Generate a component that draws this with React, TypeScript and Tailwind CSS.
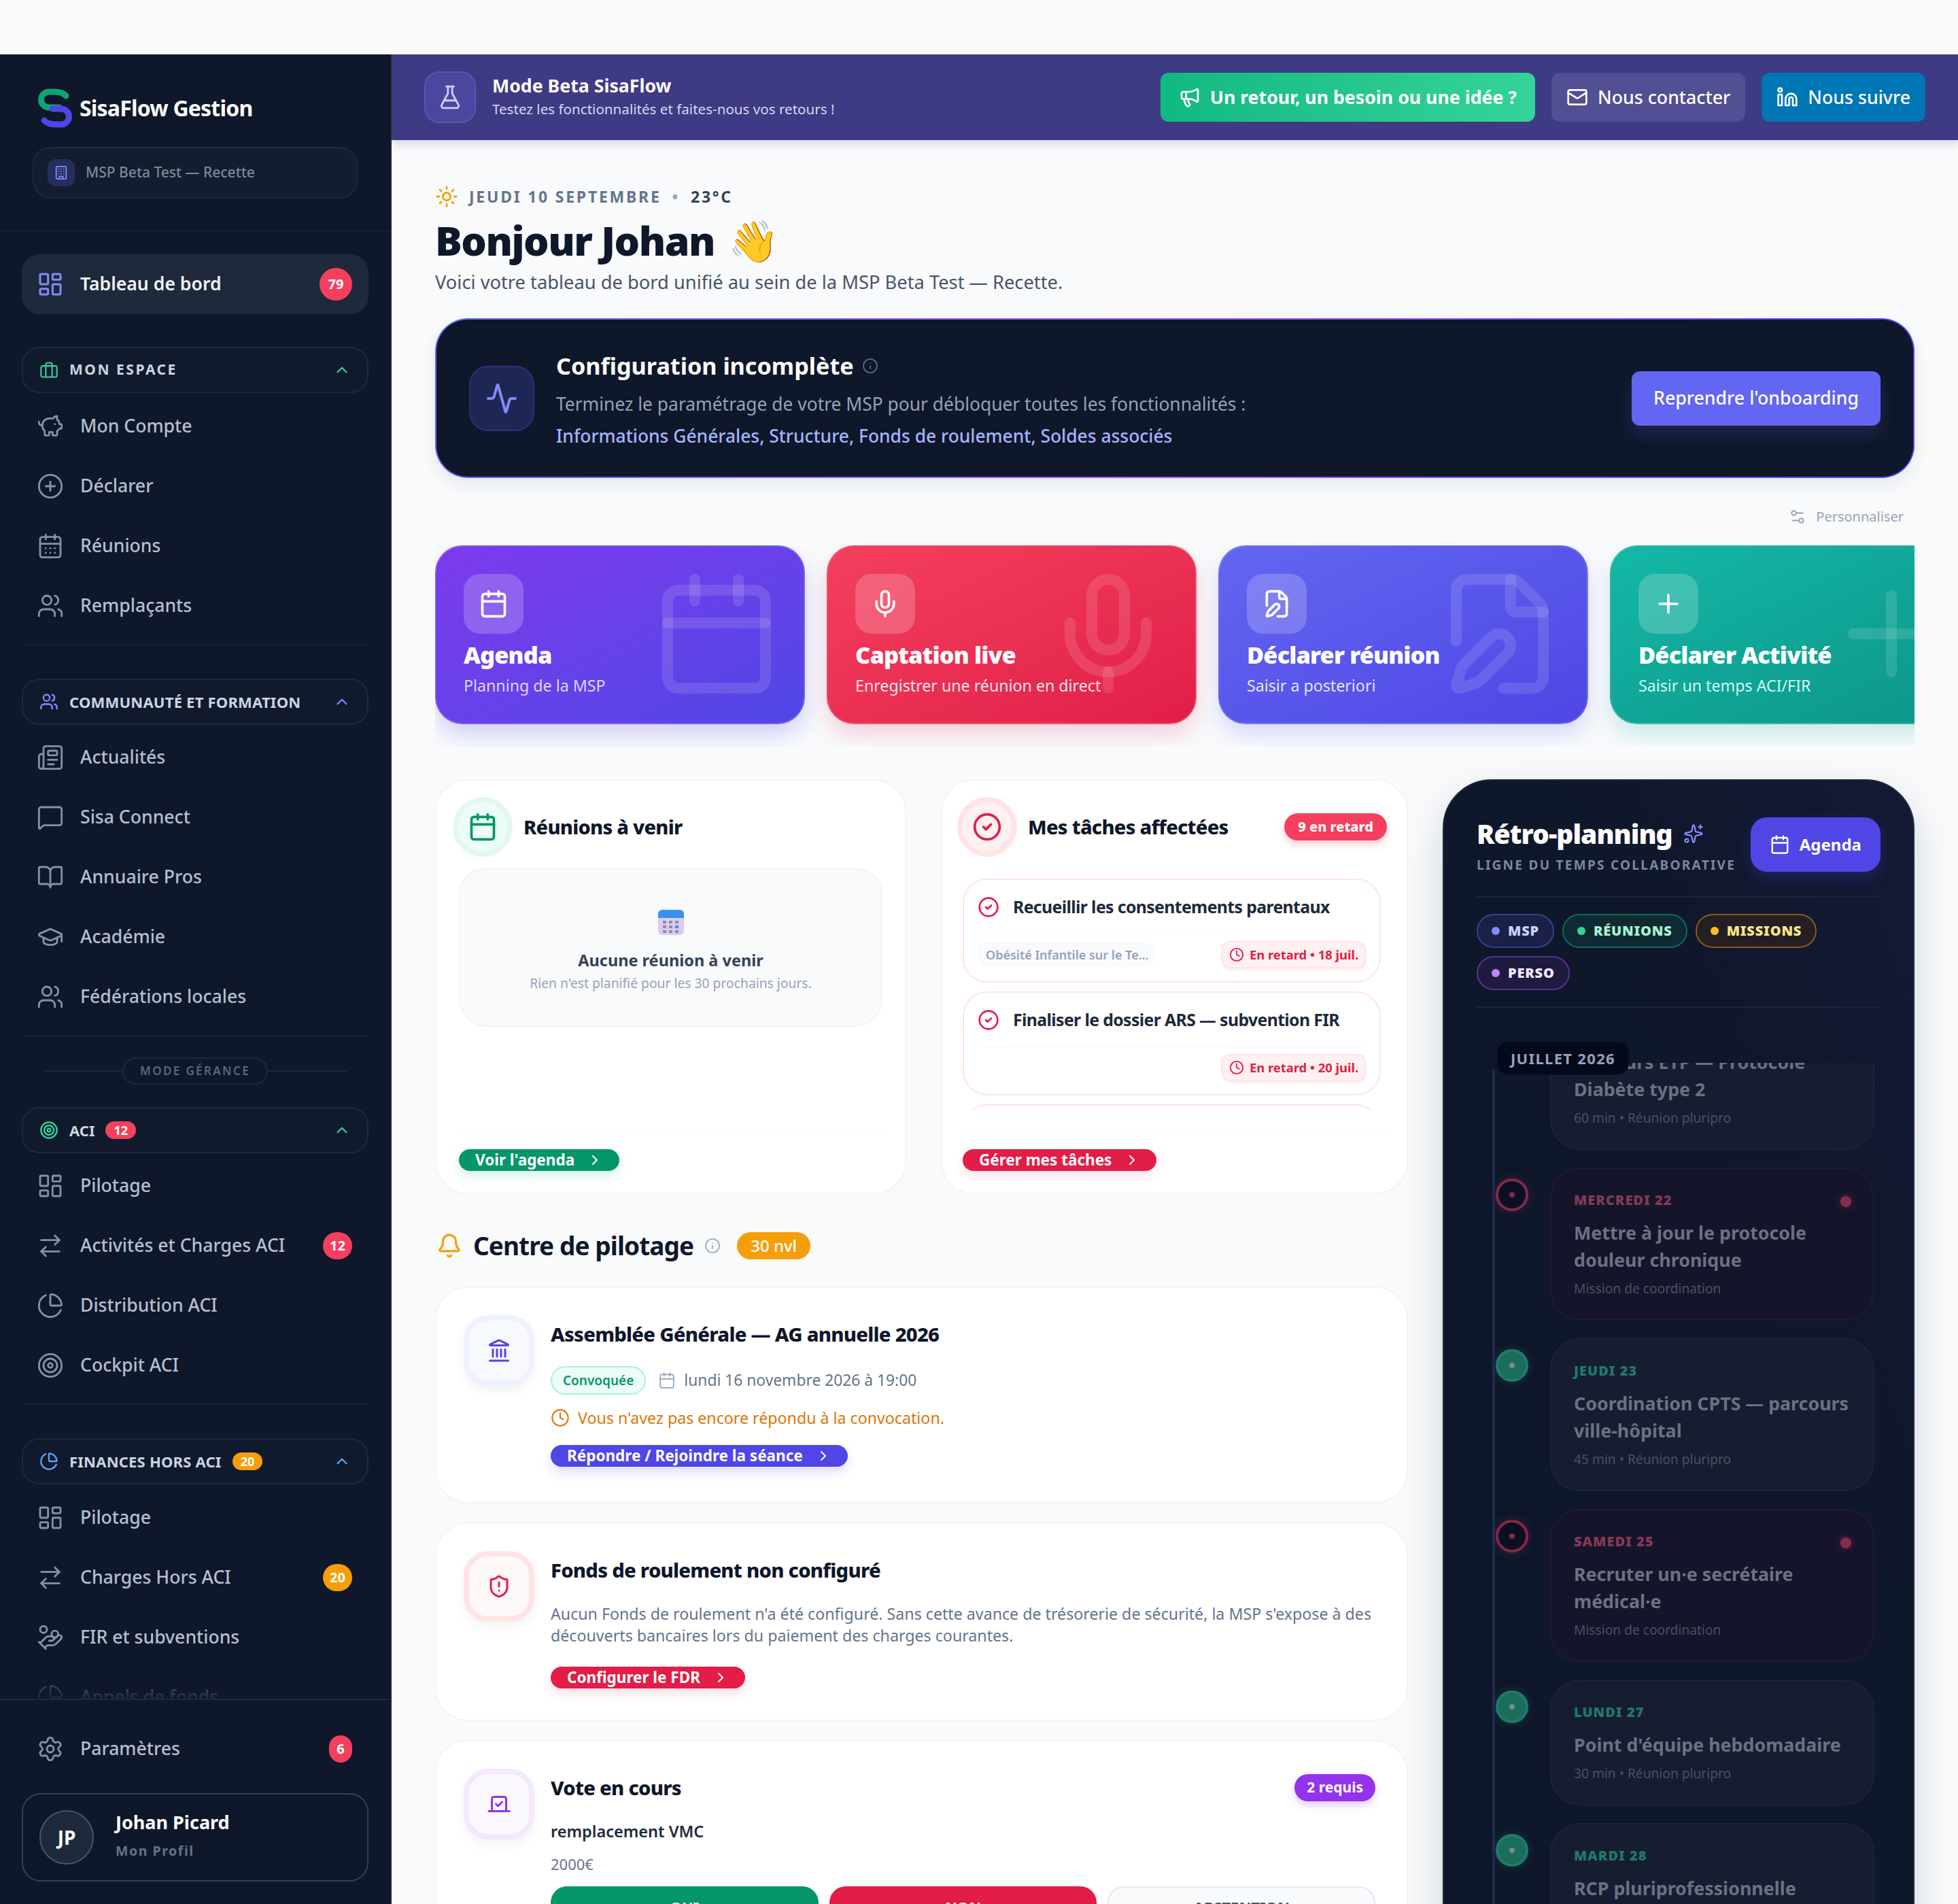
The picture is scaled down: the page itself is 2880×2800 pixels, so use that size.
import React from "react";
import {
  Activity, ArrowRightLeft, Bell, BookOpen, Building, Calendar, CalendarDays, ChartPie, ChevronRight, ChevronUp,
  CircleCheck, CirclePlus, Clock, FilePen, FlaskConical, GraduationCap, HandCoins, Info, Landmark, LayoutDashboard,
  Linkedin, Mail, Megaphone, MessageSquare, Mic, Newspaper, PiggyBank, Plus, Settings, Settings2, ShieldAlert,
  Sparkles, Sun, Target, Users, Vote,
} from "lucide-react";

function Logo() {
  return (
    <svg width="50" height="58" viewBox="0 0 50 58" fill="none" strokeWidth="9" strokeLinecap="round">
      <path d="M41 11 C37 6 30 5 23 5 H16 a11.5 11.5 0 0 0 0 23 H31" stroke="#0ea572" />
      <path d="M9 47 C13 52 20 53 27 53 H34 a11.5 11.5 0 0 0 0 -23 H21" stroke="#4f46e5" />
    </svg>
  );
}

function BriefcaseBars() {
  return (
    <svg width="28" height="28" viewBox="0 0 24 24" fill="none" stroke="#34d399" strokeWidth="1.8" strokeLinejoin="round">
      <rect x="2" y="7" width="20" height="14" rx="2" />
      <path d="M8 21V7M16 21V7M8 7V5a2 2 0 0 1 2-2h4a2 2 0 0 1 2 2v2" />
    </svg>
  );
}

function CalendarEmoji() {
  return (
    <svg width="40" height="40" viewBox="0 0 40 40">
      <rect x="1" y="2" width="38" height="37" rx="6" fill="#d9cdf0" />
      <path d="M1 14V8a6 6 0 0 1 6-6h26a6 6 0 0 1 6 6v6z" fill="#3b8ef3" />
      {[8, 17, 26].map((x) =>
        [18, 25, 32].map((y) => (
          <rect key={`${x}-${y}`} x={x} y={y} width="5" height="4" fill={x === 26 && y === 25 ? "#3b8ef3" : "#8f8ba3"} />
        )),
      )}
    </svg>
  );
}

function Badge({ value, amber }: { value: string; amber?: boolean }) {
  return (
    <span className={`ml-auto flex h-[40px] min-w-[34px] items-center justify-center rounded-full px-[10px] text-[20px] font-bold text-white ${amber ? "bg-[#f59e0b]" : "bg-[#f43f5e]"}`}>
      {value}
    </span>
  );
}

function NavItem({ icon: Icon, label, badge, amber }: { icon: React.ElementType; label: string; badge?: string; amber?: boolean }) {
  return (
    <div className="flex h-[88px] items-center gap-6 pl-[22px] pr-6 text-[26.6px] font-medium text-[#b4bfcf]">
      <Icon size={40} strokeWidth={1.7} className="shrink-0 text-[#8491a6]" />
      <span>{label}</span>
      {badge && <Badge value={badge} amber={amber} />}
    </div>
  );
}

function SectionHeader({ icon, label, tracking, chevron, count, amber }: { icon: React.ReactNode; label: string; tracking: string; chevron: string; count?: string; amber?: boolean }) {
  return (
    <div className="flex h-[68px] items-center gap-4 rounded-[26px] border-2 border-[#1e293b] bg-[#111a2c] pl-6 pr-6">
      {icon}
      <span className={`font-bold text-[#cbd5e1] ${tracking}`}>{label}</span>
      {count && (
        <span className={`flex h-[26px] items-center rounded-full px-3 text-[18px] font-bold text-white ${amber ? "bg-[#f59e0b]" : "bg-[#f43f5e]"}`}>{count}</span>
      )}
      <ChevronUp size={26} strokeWidth={2} className={`ml-auto ${chevron}`} />
    </div>
  );
}

function Sidebar() {
  return (
    <aside className="flex h-full w-[576px] shrink-0 flex-col border-r-2 border-[#1e293b] bg-[#0f172a]">
      <div className="border-b-2 border-[#162033] px-12 pb-[47px] pt-[50px]">
        <div className="flex items-center gap-[11px] pl-2">
          <Logo />
          <span className="text-[32px] font-bold tracking-tight text-white">SisaFlow Gestion</span>
        </div>
        <div className="mt-7 flex h-[76px] items-center gap-4 rounded-[26px] border-2 border-[#1e293b] bg-[#141d2f] pl-5">
          <span className="flex h-10 w-10 items-center justify-center rounded-xl bg-[#252e5c]">
            <Building size={22} className="text-[#818cf8]" />
          </span>
          <span className="text-[21px] font-medium text-[#7d8899]">MSP Beta Test — Recette</span>
        </div>
      </div>

      <nav className="relative flex-1 overflow-hidden px-8 pt-[33px]">
        <div className="flex h-[88px] items-center gap-6 rounded-[26px] bg-[#1e293b] pl-[22px] pr-6 text-[26.6px] font-semibold text-[#f1f5f9]">
          <LayoutDashboard size={40} strokeWidth={1.8} className="text-[#818cf8]" />
          <span>Tableau de bord</span>
          <span className="ml-auto flex h-12 w-12 items-center justify-center rounded-full bg-[#f43f5e] text-[20px] font-bold text-white">79</span>
        </div>

        <div className="mt-12 border-b-2 border-[#162033] pb-3">
          <SectionHeader icon={<BriefcaseBars />} label="MON ESPACE" tracking="text-[21px] tracking-[0.12em]" chevron="text-[#34d399]" />
          <div className="mt-[5px]">
            <NavItem icon={PiggyBank} label="Mon Compte" />
            <NavItem icon={CirclePlus} label="Déclarer" />
            <NavItem icon={CalendarDays} label="Réunions" />
            <NavItem icon={Users} label="Remplaçants" />
          </div>
        </div>

        <div className="mt-[49px] border-b-2 border-[#162033] pb-3">
          <SectionHeader icon={<Users size={28} className="text-[#818cf8]" />} label="COMMUNAUTÉ ET FORMATION" tracking="text-[22px] tracking-[0.01em]" chevron="text-[#818cf8]" />
          <div className="mt-1">
            <NavItem icon={Newspaper} label="Actualités" />
            <NavItem icon={MessageSquare} label="Sisa Connect" />
            <NavItem icon={BookOpen} label="Annuaire Pros" />
            <NavItem icon={GraduationCap} label="Académie" />
            <NavItem icon={Users} label="Fédérations locales" />
          </div>
        </div>

        <div className="mt-[31px] flex items-center px-8">
          <div className="h-[2px] flex-1 bg-[#1e293b]" />
          <span className="flex h-10 items-center rounded-full border-2 border-[#1e293b] px-6 text-[17px] font-semibold tracking-[0.14em] text-[#5b677a]">MODE GÉRANCE</span>
          <div className="h-[2px] flex-1 bg-[#1e293b]" />
        </div>

        <div className="mt-[33px] border-b-2 border-[#162033] pb-3">
          <SectionHeader icon={<Target size={28} className="text-[#34d399]" />} label="ACI" tracking="text-[22px]" chevron="text-[#34d399]" count="12" />
          <div className="mt-1">
            <NavItem icon={LayoutDashboard} label="Pilotage" />
            <NavItem icon={ArrowRightLeft} label="Activités et Charges ACI" badge="12" />
            <NavItem icon={ChartPie} label="Distribution ACI" />
            <NavItem icon={Target} label="Cockpit ACI" />
          </div>
        </div>

        <div className="mt-[49px]">
          <SectionHeader icon={<ChartPie size={28} className="text-[#60a5fa]" />} label="FINANCES HORS ACI" tracking="text-[22px] tracking-[0.01em]" chevron="text-[#60a5fa]" count="20" amber />
          <div className="mt-[5px]">
            <NavItem icon={LayoutDashboard} label="Pilotage" />
            <NavItem icon={ArrowRightLeft} label="Charges Hors ACI" badge="20" amber />
            <NavItem icon={HandCoins} label="FIR et subventions" />
            <NavItem icon={ChartPie} label="Appels de fonds" />
          </div>
        </div>

        <div className="absolute inset-x-0 bottom-0 h-[50px] bg-linear-to-b from-[#0f172a]/30 to-[#0f172a]/90" />
      </nav>

      <div className="border-t-2 border-[#1e293b] px-8 pb-[33px] pt-7">
        <NavItem icon={Settings} label="Paramètres" badge="6" />
        <div className="mt-[21px] flex h-[130px] items-center gap-8 rounded-[28px] border-2 border-[#334155] pl-6">
          <span className="flex h-20 w-20 items-center justify-center rounded-full border-2 border-[#475569] bg-[#1e293b] text-[28px] font-bold text-white">JP</span>
          <div className="-mt-2">
            <div className="text-[27px] font-bold leading-[40px] text-white">Johan Picard</div>
            <div className="mt-[8px] text-[19.5px] font-bold leading-[28px] tracking-[0.08em] text-[#64748b]">Mon Profil</div>
          </div>
        </div>
      </div>
    </aside>
  );
}

function BetaBanner() {
  return (
    <header className="flex h-[126px] shrink-0 items-center bg-[#3e3a84] pl-12 pr-12 shadow-[0_6px_12px_rgba(15,23,42,0.14)]">
      <span className="flex h-[76px] w-[76px] items-center justify-center rounded-[22px] border-2 border-[#5a56b4] bg-[#4b479f]">
        <FlaskConical size={38} strokeWidth={1.8} className="text-[#c7d2fe]" />
      </span>
      <div className="-mt-1 ml-6">
        <div className="text-[26.7px] font-bold leading-[38px] text-white">Mode Beta SisaFlow</div>
        <div className="text-[20.6px] leading-[30px] text-[#d6d8f0]">Testez les fonctionnalités et faites-nous vos retours !</div>
      </div>
      <div className="ml-auto flex gap-6">
        <button className="flex h-[72px] items-center gap-[14px] rounded-xl bg-linear-to-r from-[#10b981] to-[#34d399] px-[27px] text-[26.7px] font-bold text-white">
          <Megaphone size={32} strokeWidth={2} /> Un retour, un besoin ou une idée ?
        </button>
        <button className="flex h-[72px] items-center gap-[14px] rounded-xl bg-[#524f94] px-[22px] text-[26.7px] font-medium text-white">
          <Mail size={32} strokeWidth={2} /> Nous contacter
        </button>
        <button className="flex h-[72px] items-center gap-[14px] rounded-xl bg-[#0077b5] px-[22px] text-[26.7px] font-medium text-white">
          <Linkedin size={32} strokeWidth={2} /> Nous suivre
        </button>
      </div>
    </header>
  );
}

const SHORTCUTS = [
  { icon: Calendar, title: "Agenda", sub: "Planning de la MSP", card: "from-[#7c3aed] to-[#4f46e5] shadow-[0_16px_32px_rgba(79,70,229,0.22)]", subCls: "text-[#ddd6fe]" },
  { icon: Mic, title: "Captation live", sub: "Enregistrer une réunion en direct", card: "from-[#f43f5e] to-[#e11d48] shadow-[0_16px_32px_rgba(225,29,72,0.18)]", subCls: "text-[#ffe4e6]" },
  { icon: FilePen, title: "Déclarer réunion", sub: "Saisir a posteriori", card: "from-[#6366f1] to-[#4f46e5] shadow-[0_16px_32px_rgba(79,70,229,0.18)]", subCls: "text-[#e0e7ff]" },
  { icon: Plus, title: "Déclarer Activité", sub: "Saisir un temps ACI/FIR", card: "from-[#14b8a6] to-[#0d9488] shadow-[0_16px_32px_rgba(13,148,136,0.18)]", subCls: "text-[#ccfbf1]" },
];

function ShortcutCard({ icon: Icon, title, sub, card, subCls }: (typeof SHORTCUTS)[number]) {
  return (
    <div className={`relative h-[263px] w-[544px] shrink-0 overflow-hidden rounded-[40px] border-2 border-white/15 bg-linear-to-br p-10 ${card}`}>
      <Icon size={192} strokeWidth={2} className="absolute right-8 top-8 text-white/[0.12]" />
      <span className="relative flex h-[88px] w-[88px] items-center justify-center rounded-3xl bg-white/20">
        <Icon size={44} strokeWidth={2} className="text-white" />
      </span>
      <div className="relative mt-[9px] text-[34.3px] font-black leading-[44px] tracking-tight text-white">{title}</div>
      <div className={`relative mt-[7px] text-[23.2px] leading-[32px] ${subCls}`}>{sub}</div>
    </div>
  );
}

function PillButton({ label, color }: { label: string; color: string }) {
  return (
    <button className={`flex h-8 w-fit items-center gap-[18px] rounded-full px-6 text-[22.5px] font-bold leading-[32px] text-white ${color}`}>
      {label} <ChevronRight size={24} strokeWidth={2} />
    </button>
  );
}

function Halo({ children, ring }: { children: React.ReactNode; ring: string }) {
  return <span className={`flex h-[88px] w-[88px] shrink-0 items-center justify-center rounded-full border-[8px] ${ring}`}>{children}</span>;
}

function TaskCard({ title, tag, due }: { title: string; tag?: string; due: string }) {
  return (
    <div className="rounded-[36px] border-2 border-[#ffe4e6] bg-white px-5 pt-5">
      <div className="flex h-10 items-center gap-[20px] text-[24.8px] font-bold tracking-tight text-[#1e293b]">
        <CircleCheck size={32} strokeWidth={2} className="text-[#e11d48]" />
        {title}
      </div>
      <div className="mt-[17px] border-t-2 border-[#f8fafc] pb-[19px] pt-[11px]">
        <div className="flex items-center justify-between">
          {tag ? <span className="flex h-9 w-[259px] items-center whitespace-nowrap rounded-xl bg-[#f8fafc] px-3 text-[18px] font-semibold text-[#94a3b8]">{tag}</span> : <span />}
          <span className="flex h-10 w-[212px] items-center justify-center gap-2 rounded-xl border-2 border-[#ffe4e6] bg-[#fff1f2] text-[18.4px] font-bold text-[#e11d48] shadow-[0_2px_4px_rgba(225,29,72,0.1)]">
            <Clock size={22} strokeWidth={2} /> {due}
          </span>
        </div>
      </div>
    </div>
  );
}

function NotificationCard({ icon, ring, children }: { icon: React.ReactNode; ring: string; children: React.ReactNode }) {
  return (
    <div className="flex gap-6 rounded-[48px] border-2 border-[#f1f5f9] bg-white p-10">
      <span className={`flex h-[104px] w-[104px] shrink-0 items-center justify-center rounded-[36px] border-[8px] shadow-[0_8px_16px_rgba(15,23,42,0.05)] ${ring}`}>{icon}</span>
      <div className="min-w-0 flex-1 pt-2">{children}</div>
    </div>
  );
}

function Home() {
  return (
    <div className="min-w-0 flex-1 px-16 pt-[67px]">
      <div className="flex h-8 items-center text-[23px] font-bold tracking-[0.12em] text-[#64748b]">
        <Sun size={34} strokeWidth={2} className="mr-[16px] text-[#f59e0b]" />
        JEUDI 10 SEPTEMBRE
        <span className="mx-4 text-[#94a3b8]">•</span>
        <span className="text-[#334155]">23°C</span>
      </div>
      <h1 className="mt-4 flex h-16 items-center gap-5 text-[59px] font-black leading-[64px] tracking-tight text-[#0f172a]">
        Bonjour Johan <span className="text-[60px] font-normal">👋</span>
      </h1>
      <p className="mt-[10px] text-[27.3px] leading-[40px] text-[#475569]">Voici votre tableau de bord unifié au sein de la MSP Beta Test — Recette.</p>

      <div className="mt-[33px] rounded-[48px] bg-linear-to-r from-[#6366f1] via-[#a855f7] to-[#4f46e5] p-[2px] shadow-[0_10px_24px_rgba(15,23,42,0.08)]">
        <div className="flex h-[231px] items-center rounded-[46px] bg-[#0f172a] pl-12 pr-12">
          <span className="flex h-24 w-24 shrink-0 items-center justify-center rounded-[28px] border-2 border-[#312e81] bg-[#1e2654]">
            <Activity size={48} strokeWidth={2} className="text-[#818cf8]" />
          </span>
          <div className="ml-8 pt-[6px]">
            <div className="flex items-center gap-3 text-[34.2px] font-bold leading-[48px] text-white">
              Configuration incomplète <Info size={24} strokeWidth={1.6} className="text-[#64748b]" />
            </div>
            <p className="mt-[8px] text-[26.4px] leading-[48px] text-[#94a3b8]">Terminez le paramétrage de votre MSP pour débloquer toutes les fonctionnalités :</p>
            <p className="text-[26.4px] font-medium leading-[46px] text-[#a5b4fc]">Informations Générales, Structure, Fonds de roulement, Soldes associés</p>
          </div>
          <button className="ml-auto flex h-20 items-center rounded-xl bg-[#6366f1] px-8 text-[26.7px] font-medium text-white shadow-[0_12px_24px_rgba(99,102,241,0.2)]">Reprendre l'onboarding</button>
        </div>
      </div>

      <div className="mt-[41px] flex h-8 items-center justify-end gap-[14px] pr-4 text-[20px] text-[#94a3b8]">
        <Settings2 size={26} strokeWidth={1.8} /> Personnaliser
      </div>

      <div className="mt-[26px] flex gap-[32px] overflow-hidden pb-[33px]">
        {SHORTCUTS.map((s) => (
          <ShortcutCard key={s.title} {...s} />
        ))}
      </div>

      <div className="mt-[48px] grid grid-cols-[1431px_694px] gap-[51px]">
        <div>
          <div className="grid grid-cols-[693px_687px] gap-[51px]">
            <div className="flex h-[610px] flex-col rounded-[48px] border-2 border-[#f1f5f9] bg-white pt-6">
              <div className="flex items-center gap-4 px-6">
                <Halo ring="border-[#e3f8ee] bg-[#ecfdf5]"><Calendar size={44} strokeWidth={2} className="text-[#059669]" /></Halo>
                <span className="text-[29px] font-extrabold tracking-tight text-[#0f172a]">Réunions à venir</span>
              </div>
              <div className="mt-4 flex-1 px-[33px]">
                <div className="flex h-[234px] flex-col items-center rounded-[40px] border-2 border-[#f1f5f9] bg-[#f8fafc] pt-[58px]">
                  <CalendarEmoji />
                  <div className="mt-[20px] text-[23.5px] font-bold leading-[32px] text-[#334155]">Aucune réunion à venir</div>
                  <div className="mt-[2px] text-[19.3px] leading-[32px] text-[#94a3b8]">Rien n'est planifié pour les 30 prochains jours.</div>
                </div>
              </div>
              <div className="mx-[33px] h-[92px] border-t-2 border-[#f8fafc] pt-[26px]">
                <PillButton label="Voir l'agenda" color="bg-[#059669] shadow-[0_8px_16px_rgba(5,150,105,0.15)]" />
              </div>
            </div>

            <div className="flex h-[610px] flex-col rounded-[48px] border-2 border-[#f1f5f9] bg-white pt-6">
              <div className="flex items-center gap-4 pl-[22px] pr-[29px]">
                <Halo ring="border-[#ffe4e6] bg-[#fff1f2]"><CircleCheck size={44} strokeWidth={2} className="text-[#e11d48]" /></Halo>
                <span className="text-[29px] font-extrabold tracking-tight text-[#0f172a]">Mes tâches affectées</span>
                <span className="ml-auto flex h-10 items-center rounded-full bg-[#f43f5e] px-5 text-[20px] font-extrabold text-white shadow-[0_6px_12px_rgba(244,63,94,0.25)]">9 en retard</span>
              </div>
              <div className="mt-8 h-[340px] overflow-hidden pl-[30px] pr-[38px]">
                <div className="flex flex-col gap-[13px]">
                  <TaskCard title="Recueillir les consentements parentaux" tag="Obésité Infantile sur le Te..." due="En retard • 18 juil." />
                  <TaskCard title="Finaliser le dossier ARS — subvention FIR" due="En retard • 20 juil." />
                  <TaskCard title="Relancer les signatures" due="En retard • 22 juil." />
                </div>
              </div>
              <div className="ml-[30px] mr-[29px] mt-auto h-[92px] border-t-2 border-[#f8fafc] pt-[26px]">
                <PillButton label="Gérer mes tâches" color="bg-[#e11d48] shadow-[0_8px_16px_rgba(225,29,72,0.12)]" />
              </div>
            </div>
          </div>

          <div className="mt-[56px] flex h-10 items-center pl-[2px]">
            <Bell size={38} strokeWidth={2} className="text-[#f59e0b]" />
            <span className="ml-4 text-[37px] font-bold tracking-tight text-[#0f172a]">Centre de pilotage</span>
            <Info size={24} strokeWidth={1.6} className="ml-4 text-[#94a3b8]" />
            <span className="ml-6 flex h-10 items-center rounded-full bg-[#f59e0b] px-5 text-[24px] font-medium text-white">30 nvl</span>
          </div>

          <div className="mt-10 flex flex-col gap-7">
            <NotificationCard ring="border-[#eef2ff] bg-[#f8f9ff]" icon={<Landmark size={36} strokeWidth={2} className="text-[#4f46e5]" />}>
              <div className="pb-3">
                <div className="text-[29.2px] font-extrabold leading-[40px] tracking-tight text-[#0f172a]">Assemblée Générale — AG annuelle 2026</div>
                <div className="mt-[27px] flex items-center gap-[18px]">
                  <span className="flex h-[42px] items-center rounded-full border-2 border-[#a7f3d0] bg-[#ecfdf5] px-[16px] text-[19px] font-semibold text-[#059669]">Convoquée</span>
                  <span className="flex items-center gap-3 text-[22.8px] text-[#64748b]"><Calendar size={26} strokeWidth={1.6} className="text-[#94a3b8]" />lundi 16 novembre 2026 à 19:00</span>
                </div>
                <div className="mt-4 flex h-9 items-center gap-3 text-[23.2px] text-[#d97706]"><Clock size={28} strokeWidth={1.8} />Vous n'avez pas encore répondu à la convocation.</div>
                <div className="mt-[22px]"><PillButton label="Répondre / Rejoindre la séance" color="bg-[#4f46e5] shadow-[0_8px_16px_rgba(79,70,229,0.18)]" /></div>
              </div>
            </NotificationCard>

            <NotificationCard ring="border-[#ffe4e6] bg-[#fff8f9]" icon={<ShieldAlert size={36} strokeWidth={2} className="text-[#e11d48]" />}>
              <div className="pb-[6px]">
                <div className="text-[29.2px] font-extrabold leading-[40px] tracking-tight text-[#0f172a]">Fonds de roulement non configuré</div>
                <p className="mt-7 text-[23.2px] leading-[32px] text-[#64748b]">Aucun Fonds de roulement n'a été configuré. Sans cette avance de trésorerie de sécurité, la MSP s'expose à des découverts bancaires lors du paiement des charges courantes.</p>
                <div className="mt-[30px]"><PillButton label="Configurer le FDR" color="bg-[#e11d48] shadow-[0_8px_16px_rgba(225,29,72,0.14)]" /></div>
              </div>
            </NotificationCard>

            <NotificationCard ring="border-[#f3e8ff] bg-[#fbf8ff]" icon={<Vote size={36} strokeWidth={2} className="text-[#9333ea]" />}>
              <div className="pr-[6px]">
                <div className="flex items-center justify-between">
                  <span className="text-[29.2px] font-extrabold leading-[40px] tracking-tight text-[#0f172a]">Vote en cours</span>
                  <span className="flex h-10 items-center rounded-full bg-[#9333ea] px-[18px] text-[21px] font-bold text-white shadow-[0_6px_12px_rgba(147,51,234,0.25)]">2 requis</span>
                </div>
                <div className="mt-[26px] text-[23.5px] font-semibold leading-[36px] text-[#1e293b]">remplacement VMC</div>
                <div className="mt-3 text-[22px] leading-[36px] text-[#64748b]">2000€</div>
                <div className="mt-[15px] grid grid-cols-3 gap-4 text-[22px] font-bold">
                  <div className="flex h-[60px] items-center justify-center rounded-3xl bg-[#059669] text-white">OUI</div>
                  <div className="flex h-[60px] items-center justify-center rounded-3xl bg-[#e11d48] text-white">NON</div>
                  <div className="flex h-[60px] items-center justify-center rounded-3xl border-2 border-[#e2e8f0] bg-[#f8fafc] text-[#475569]">ABSTENTION</div>
                </div>
              </div>
            </NotificationCard>
          </div>
        </div>

        <RetroPlanning />
      </div>
    </div>
  );
}

const FILTERS = [
  { label: "MSP", cls: "border-[#3a3f8f] bg-[#1a2046] text-[#c7d2fe]", dot: "bg-[#818cf8]" },
  { label: "RÉUNIONS", cls: "border-[#0e6b58] bg-[#0f2a33] text-[#a7f3d0]", dot: "bg-[#34d399]" },
  { label: "MISSIONS", cls: "border-[#8a5a1a] bg-[#251f24] text-[#fde68a]", dot: "bg-[#fbbf24]" },
  { label: "PERSO", cls: "border-[#5b3391] bg-[#1f1b40] text-[#f3e8ff]", dot: "bg-[#c084fc]" },
];

const EVENTS = [
  { id: "a", day: "VENDREDI 17", title: "Parcours ETP — Protocole Diabète type 2", meta: "60 min • Réunion pluripro", late: false, first: true },
  { id: "b", day: "MERCREDI 22", title: "Mettre à jour le protocole douleur chronique", meta: "Mission de coordination", late: true },
  { id: "c", day: "JEUDI 23", title: "Coordination CPTS — parcours ville-hôpital", meta: "45 min • Réunion pluripro", late: false },
  { id: "d", day: "SAMEDI 25", title: "Recruter un·e secrétaire médical·e", meta: "Mission de coordination", late: true },
  { id: "e", day: "LUNDI 27", title: "Point d'équipe hebdomadaire", meta: "30 min • Réunion pluripro", late: false },
  { id: "f", day: "MARDI 28", title: "RCP pluriprofessionnelle", meta: "60 min • Réunion pluripro", late: false },
];

function TimelineRow({ day, title, meta, late, first }: (typeof EVENTS)[number]) {
  return (
    <div className={`flex items-start gap-8 pl-[28px] ${first ? "mt-[-97px]" : ""}`}>
      <span className={`mt-4 flex h-12 w-12 shrink-0 items-center justify-center rounded-full border-[4px] ${late ? "border-[#83294a] bg-[#0a1022] shadow-[0_0_14px_rgba(131,41,74,0.4)]" : "border-[#24786a] bg-[#1a6d5c] shadow-[0_0_14px_rgba(26,109,92,0.4)]"}`}>
        <span className={`h-2 w-2 rounded-full ${late ? "bg-[#83294a]" : "bg-[#7a8a8a]"}`} />
      </span>
      <div className={`relative min-w-0 flex-1 rounded-[44px] border-2 px-[33px] pb-[30px] pt-8 ${late ? "border-[#241a30] bg-[#14152a]" : "border-[#1c2438] bg-[#161d31]"}`}>
        <div className={`text-[20px] font-black leading-[28px] tracking-wider ${late ? "text-[#833a55]" : "text-[#1f7a67]"}`}>{day}</div>
        <div className="mt-[14px] text-[26.8px] font-bold leading-[40px] text-[#6c7180]">{title}</div>
        <div className="mt-[7px] text-[19.2px] leading-[30px] text-[#4a5060]">{meta}</div>
        {late && <span className="absolute right-[32px] top-[40px] h-4 w-4 rounded-full bg-[#8a2a4b] shadow-[0_0_12px_rgba(138,42,75,0.6)]" />}
      </div>
    </div>
  );
}

function RetroPlanning() {
  return (
    <div className="relative h-[1700px] rounded-t-[72px] border-2 border-[#1e293b] bg-linear-to-bl from-[#141936] via-[#0f172a] via-40% to-[#0f172a] px-12 pt-[54px] shadow-[0_24px_60px_rgba(15,23,42,0.16)]">
      <div className="flex h-20 justify-between">
        <div>
          <div className="flex items-center gap-4 text-[39px] font-black leading-[48px] tracking-tight text-white">
            Rétro-planning <Sparkles size={30} strokeWidth={1.8} className="text-[#818cf8]" />
          </div>
          <div className="mt-2 whitespace-nowrap text-[19px] font-bold leading-[28px] tracking-[0.12em] text-[#7c889b]">LIGNE DU TEMPS COLLABORATIVE</div>
        </div>
        <button className="flex h-20 shrink-0 items-center gap-[14px] rounded-3xl bg-[#4f46e5] px-7 text-[24px] font-bold text-white shadow-[0_8px_20px_rgba(79,70,229,0.25)]">
          <Calendar size={30} strokeWidth={2} /> Agenda
        </button>
      </div>
      <div className="mt-9 flex flex-wrap gap-3 border-y-2 border-[#1c2438] py-6">
        {FILTERS.map((f) => (
          <span key={f.label} className={`flex h-[50px] items-center gap-3 rounded-full border-2 px-[20px] text-[20px] font-black tracking-[0.04em] ${f.cls}`}>
            <span className={`h-3 w-3 rounded-full ${f.dot}`} />
            {f.label}
          </span>
        ))}
      </div>

      <div className="relative pt-[81px]">
        <div className="absolute bottom-0 left-[23px] top-[90px] w-1 bg-[#1e2a50]" />
        <div className="h-[1300px] overflow-hidden pr-[9px]">
          <div className="flex flex-col gap-[26px]">
            {EVENTS.map((e) => (
              <TimelineRow key={e.id} {...e} />
            ))}
          </div>
        </div>
        <span className="absolute left-[30px] top-[50px] flex h-12 items-center rounded-2xl bg-[#040a1c] px-5 text-[22px] font-bold tracking-[0.06em] text-[#94a3b8]">JUILLET 2026</span>
      </div>
    </div>
  );
}

export default function App() {
  return (
    <div className="flex h-[2800px] flex-col overflow-hidden bg-[#f8fafc] [font-family:'Noto_Sans',sans-serif]">
      <div className="h-20 shrink-0" />
      <div className="flex min-h-0 flex-1">
        <Sidebar />
        <main className="flex min-w-0 flex-1 flex-col overflow-hidden">
          <BetaBanner />
          <Home />
        </main>
      </div>
    </div>
  );
}
